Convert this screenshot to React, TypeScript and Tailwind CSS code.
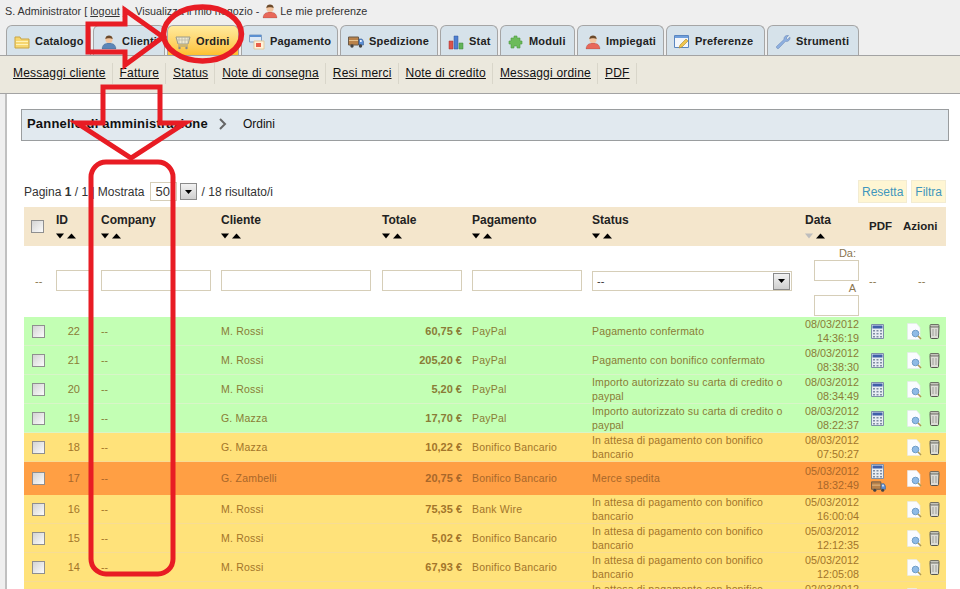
import React from 'react';

const Folder = () => (
  <svg width="16" height="16" viewBox="0 0 16 16" className="shrink-0">
    <path d="M1 3h5l1 2h8v9H1z" fill="#f6d66f" stroke="#c9a545" />
    <path d="M2 7h12v1H2zM2 10h12v1H2z" fill="#fff3b8" />
  </svg>
);

const Person = ({ shirt = '#5b86b8', hair = '#6b4a2b' }: { shirt?: string; hair?: string }) => (
  <svg width="16" height="16" viewBox="0 0 16 16" className="shrink-0">
    <path d="M1 15c0-4 3-6 7-6s7 2 7 6z" fill={shirt} stroke="#00000040" strokeWidth="0.5" />
    <circle cx="8" cy="5.5" r="3.6" fill="#f3c6a0" />
    <path d="M4.3 5C4.5 2.5 6 1.5 8 1.5S11.500 2.500 11.700 5C10 4 6 4 4.300 5z" fill={hair} />
  </svg>
);

const Cart = () => (
  <svg width="16" height="16" viewBox="0 0 16 16" className="shrink-0">
    <path d="M1 3h14l-2 7H3z" fill="#efe9d0" stroke="#9a9a8a" />
    <path d="M4 3v7M7 3v7M10 3v7M13 3v6M2 6h12" stroke="#b4b4a4" strokeWidth="0.7" />
    <path d="M3 12h10" stroke="#9a9a8a" />
    <circle cx="4.500" cy="14" r="1.200" fill="#888" />
    <circle cx="11.500" cy="14" r="1.200" fill="#888" />
  </svg>
);

const Payment = () => (
  <svg width="16" height="16" viewBox="0 0 16 16" className="shrink-0">
    <path d="M0.500 1h12v7H0.500z" fill="#dce9f6" stroke="#7f9fc4" />
    <path d="M1 1h11v2H1z" fill="#5a8fd0" />
    <path d="M5 7h10v8H5z" fill="#fff2d8" stroke="#e0c9a0" />
    <path d="M7 9h5v4H7z" fill="#e8604a" />
  </svg>
);

const Truck = ({ w = 16, h = 14 }: { w?: number; h?: number }) => (
  <svg width={w} height={h} viewBox="0 0 16 14" className="shrink-0">
    <path d="M0.500 2h10v8H0.500z" fill="#b9824a" stroke="#6b5a48" />
    <path d="M1 5h9v1H1z" fill="#e6c28e" />
    <path d="M11 4h3l1.500 2.500V10H11z" fill="#5b8fd6" stroke="#3c5f90" strokeWidth="0.6" />
    <path d="M12 5h1.700v2H12z" fill="#e5f0ff" />
    <circle cx="4" cy="11" r="1.700" fill="#444" />
    <circle cx="12.500" cy="11" r="1.700" fill="#444" />
  </svg>
);

const Chart = () => (
  <svg width="16" height="16" viewBox="0 0 16 16" className="shrink-0">
    <path d="M1 7h4v8H1z" fill="#d9534a" stroke="#a33" strokeWidth="0.5" />
    <path d="M6 2h4v13H6z" fill="#4f7fd0" stroke="#2f569a" strokeWidth="0.5" />
    <path d="M11 9h4v6h-4z" fill="#62b45a" stroke="#3c8438" strokeWidth="0.5" />
  </svg>
);

const Puzzle = () => (
  <svg width="16" height="16" viewBox="0 0 16 16" className="shrink-0">
    <path d="M6 2h3v2h3v3h2v3h-2v4H9v-2H6v2H3v-4H1V7h2V4h3z" fill="#6cbb5a" stroke="#4e9a42" strokeWidth="0.6" />
  </svg>
);

const WindowPen = () => (
  <svg width="16" height="16" viewBox="0 0 16 16" className="shrink-0">
    <path d="M0.500 1.500h14v12h-14z" fill="#f3f6fa" stroke="#5a86c0" />
    <path d="M1 2h13v2H1z" fill="#6f9fdc" />
    <path d="M5 14l1-3 6-6 2 2-6 6z" fill="#f0c64e" stroke="#a8862e" strokeWidth="0.6" />
  </svg>
);

const Wrench = () => (
  <svg width="16" height="16" viewBox="0 0 16 16" className="shrink-0">
    <path d="M1.500 12.500L9 5.500C8.600 3 10.500 1 13.500 1.500L11 4l1.500 1.500L15 3.200C15.300 6 13 8 10.500 7.300L3.500 14.500C2.500 15 1 13.700 1.500 12.500z" fill="#8eb0e0" stroke="#6a88b8" strokeWidth="0.6" />
  </svg>
);

const Calc = () => (
  <svg width="13" height="15" viewBox="0 0 13 15" className="block shrink-0">
    <path d="M0.500 0.500h12v14h-12z" fill="#e8edf3" stroke="#7d8fa8" />
    <path d="M1.500 1.500h10v3h-10z" fill="#3f5fa8" />
    <path d="M2 6h2v1.500H2zM5.500 6h2v1.500h-2zM9 6h2v1.500H9zM2 9h2v1.500H2zM5.500 9h2v1.500h-2zM9 9h2v1.500H9zM2 12h2v1.500H2zM5.500 12h2v1.500h-2zM9 12h2v1.500H9z" fill="#7f8da3" />
  </svg>
);

const DocSearch = () => (
  <svg width="15" height="17" viewBox="0 0 15 17" className="block shrink-0">
    <path d="M0.500 0.500h9l3.500 4v12h-12.500z" fill="#fbfcff" stroke="#e4e7ee" strokeWidth="0.6" />
    <circle cx="8.500" cy="10.500" r="3.300" fill="#8fbbe6" stroke="#6e9cc8" />
    <path d="M11 13l3 3" stroke="#b09a50" strokeWidth="1.600" />
  </svg>
);

const Trash = () => (
  <svg width="11" height="15" viewBox="0 0 11 15" className="block shrink-0">
    <path d="M1 2.500h9l-0.500 11q-0.100 1-1 1h-6q-0.900 0-1-1z" fill="#dcdcd6" stroke="#55554f" />
    <rect x="1" y="0.500" width="9" height="2.500" rx="1" fill="#c4c4bc" stroke="#55554f" strokeWidth="0.8" />
    <path d="M4 5v7M7 5v7" stroke="#a0a09a" />
  </svg>
);

const Sort = ({ faded = false }: { faded?: boolean }) => (
  <svg width="20" height="6" viewBox="0 0 20 6" className="block">
    <path d="M0 0.500h8l-4 5z" fill={faded ? '#bdbdbd' : '#000'} />
    <path d="M11 5.500h9l-4.500-5z" fill="#000" />
  </svg>
);

const Check = () => (
  <span className="block w-[13px] h-[13px] border border-[#8f8f8f] bg-gradient-to-br from-[#d4d4d4] to-[#fbfbfb]" />
);

const SelectArrow = () => (
  <span className="flex items-center justify-center w-[17px] h-[17px] border border-[#8b8b8b] bg-gradient-to-b from-[#f2f2f2] to-[#cfcfcf]">
    <svg width="7" height="4" viewBox="0 0 7 4"><path d="M0 0h7L3.500 4z" fill="#000" /></svg>
  </span>
);

const tabs = [
  { label: 'Catalogo', icon: <Folder />, w: 'w-[85px]' },
  { label: 'Clienti', icon: <Person />, w: 'w-[72px]' },
  { label: 'Ordini', icon: <Cart />, w: 'w-[72px]', active: true },
  { label: 'Pagamento', icon: <Payment />, w: 'w-[97px]' },
  { label: 'Spedizione', icon: <Truck />, w: 'w-[98px]' },
  { label: 'Stat', icon: <Chart />, w: 'w-[58px]' },
  { label: 'Moduli', icon: <Puzzle />, w: 'w-[75px]' },
  { label: 'Impiegati', icon: <Person shirt="#e8685a" />, w: 'w-[87px]' },
  { label: 'Preferenze', icon: <WindowPen />, w: 'w-[99px]' },
  { label: 'Strumenti', icon: <Wrench />, w: 'w-[92px]' },
];

const subLinks = ['Messaggi cliente', 'Fatture', 'Status', 'Note di consegna', 'Resi merci', 'Note di credito', 'Messaggi ordine', 'PDF'];

const WAIT = 'In attesa di pagamento con bonifico bancario';
const AUTH = 'Importo autorizzato su carta di credito o paypal';

type Row = { id: number; name: string; total: string; pay: string; status: string; date: string; time: string; kind: 'green' | 'yellow' | 'orange' };

const rows: Row[] = [
  { id: 22, name: 'M. Rossi', total: '60,75 €', pay: 'PayPal', status: 'Pagamento confermato', date: '08/03/2012', time: '14:36:19', kind: 'green' },
  { id: 21, name: 'M. Rossi', total: '205,20 €', pay: 'PayPal', status: 'Pagamento con bonifico confermato', date: '08/03/2012', time: '08:38:30', kind: 'green' },
  { id: 20, name: 'M. Rossi', total: '5,20 €', pay: 'PayPal', status: AUTH, date: '08/03/2012', time: '08:34:49', kind: 'green' },
  { id: 19, name: 'G. Mazza', total: '17,70 €', pay: 'PayPal', status: AUTH, date: '08/03/2012', time: '08:22:37', kind: 'green' },
  { id: 18, name: 'G. Mazza', total: '10,22 €', pay: 'Bonifico Bancario', status: WAIT, date: '08/03/2012', time: '07:50:27', kind: 'yellow' },
  { id: 17, name: 'G. Zambelli', total: '20,75 €', pay: 'Bonifico Bancario', status: 'Merce spedita', date: '05/03/2012', time: '18:32:49', kind: 'orange' },
  { id: 16, name: 'M. Rossi', total: '75,35 €', pay: 'Bank Wire', status: WAIT, date: '05/03/2012', time: '16:00:04', kind: 'yellow' },
  { id: 15, name: 'M. Rossi', total: '5,02 €', pay: 'Bonifico Bancario', status: WAIT, date: '05/03/2012', time: '12:12:35', kind: 'yellow' },
  { id: 14, name: 'M. Rossi', total: '67,93 €', pay: 'Bonifico Bancario', status: WAIT, date: '05/03/2012', time: '12:05:08', kind: 'yellow' },
  { id: 13, name: 'M. Rossi', total: '31,40 €', pay: 'Bonifico Bancario', status: WAIT, date: '02/03/2012', time: '18:41:12', kind: 'yellow' },
];

const rowClass = {
  green: 'bg-[#c3ffb4] text-[#8a7c36] [&>td]:border-[#d8f5c8]',
  yellow: 'bg-[#ffe27a] text-[#a3752a] [&>td]:border-[#f7dc94]',
  orange: 'bg-[#ff9f44] text-[#a9672a] [&>td]:border-[#ff9f44]',
};

const headers = ['ID', 'Company', 'Cliente', 'Totale', 'Pagamento', 'Status'];

const FilterInput = ({ className }: { className: string }) => (
  <div className={`h-[21px] border border-[#d6ceb8] bg-white ${className}`} />
);

export default function App() {
  return (
    <div className="relative h-[589px] w-[960px] overflow-hidden bg-[#efefef] font-['Liberation_Sans',Arial,sans-serif] text-[11px] text-[#333]">
      {/* Top line */}
      <div className="flex h-[25px] items-center pl-[5px] pb-[3px] text-[10.8px]">
        <span>S. Administrator [ <span className="underline">logout</span> ] - Visualizza il mio negozio - </span>
        <span className="ml-[3px] mr-[2px]"><Person shirt="#e8685a" /></span>
        <span>Le mie preferenze</span>
      </div>

      {/* Tabs */}
      <div className="flex h-[30px] gap-[2px] pl-[6px]">
        {tabs.map((t) => (
          <div
            key={t.label}
            className={`${t.w} flex items-center gap-[5px] pl-[7px] pt-[2px] rounded-t-[6px] border border-b-0 border-[#a5a5a5] text-[11px] font-bold tracking-[0.2px] text-[#222] ${
              t.active ? 'bg-gradient-to-b from-[#ffeb9c] to-[#fdc12e]' : 'bg-[#d6e2ea]'
            }`}
          >
            {t.icon}
            <span>{t.label}</span>
          </div>
        ))}
      </div>

      {/* Sub navigation */}
      <div className="flex h-[39px] items-center border-y border-[#a3a3a3] bg-[#ebe8dd] pl-[6px] pb-[3px]">
        {subLinks.map((l) => (
          <div key={l} className="flex h-[21px] items-center border-r border-[#d9d6ca] pl-[7px] pr-[6px] text-[12px] tracking-[0.2px] text-[#111] underline">
            {l}
          </div>
        ))}
      </div>

      {/* Main */}
      <div className="ml-[5px] h-[500px] border-l-2 border-[#c0c0c0] bg-white pl-[14px] pt-[15px]">
        <div className="flex h-[32px] w-[928px] items-center border border-[#9a9d9f] bg-[#e1e9ef] pl-[5px] pb-[2px] text-[#111]">
          <span className="text-[13px] font-bold tracking-[0.2px]">Pannello di amministrazione</span>
          <svg width="10" height="12" viewBox="0 0 10 12" className="ml-[10px] mr-[15px]"><path d="M2 1l5 5-5 5" fill="none" stroke="#666" strokeWidth="2" /></svg>
          <span className="text-[12px]">Ordini</span>
        </div>

        {/* Pagination toolbar */}
        <div className="mt-[38px] flex h-[25px] w-[925px] items-center pl-[3px] text-[12px] text-[#333]">
          <span>Pagina <b>1</b> / 1 | Mostrata</span>
          <span className="ml-[5px] flex h-[19px] w-[27px] items-center border border-[#d6ceb8] pl-[5px] text-[13px]">50</span>
          <span className="ml-[3px]"><SelectArrow /></span>
          <span className="ml-[5px]">/ 18 risultato/i</span>
          <span className="ml-auto flex h-[23px] items-center border border-[#f3ecd2] bg-[#fff6d3] px-[3px] text-[#3f97bd]">Resetta</span>
          <span className="ml-[4px] flex h-[23px] items-center border border-[#f3ecd2] bg-[#fff6d3] px-[3px] text-[#3f97bd]">Filtra</span>
        </div>

        {/* Orders table */}
        <table className="ml-[3px] mt-[3px] w-[922px] table-fixed border-separate border-spacing-0">
          <colgroup>
            <col className="w-[28px]" />
            <col className="w-[45px]" />
            <col className="w-[120px]" />
            <col className="w-[161px]" />
            <col className="w-[90px]" />
            <col className="w-[120px]" />
            <col className="w-[213px]" />
            <col className="w-[64px]" />
            <col className="w-[34px]" />
            <col className="w-[47px]" />
          </colgroup>
          <thead>
            <tr className="h-[39px] bg-[#f4e6cc] text-[12px] font-bold text-[#222]">
              <th className="pl-[7px]"><Check /></th>
              {headers.map((h) => (
                <th key={h} className="pl-[4px] pt-[6px] text-left align-top font-bold">
                  <div className="leading-[14px]">{h}</div>
                  <div className="mt-[6px]"><Sort /></div>
                </th>
              ))}
              <th className="pl-[4px] pt-[6px] text-left align-top font-bold">
                <div className="leading-[14px]">Data</div>
                <div className="mt-[6px]"><Sort faded /></div>
              </th>
              <th className="pl-[4px] text-left text-[11.5px] font-bold">PDF</th>
              <th className="pl-[4px] text-left text-[11.5px] font-bold">Azioni</th>
            </tr>
            <tr className="h-[71px] bg-white text-[#8a7650]">
              <td className="pl-[11px]">--</td>
              <td className="pl-[4px] pb-[2px]"><FilterInput className="w-[34px]" /></td>
              <td className="pl-[4px] pb-[2px]"><FilterInput className="w-[110px]" /></td>
              <td className="pl-[4px] pb-[2px]"><FilterInput className="w-[150px]" /></td>
              <td className="pl-[4px] pb-[2px]"><FilterInput className="w-[80px]" /></td>
              <td className="pl-[4px] pb-[2px]"><FilterInput className="w-[110px]" /></td>
              <td className="pl-[4px] pb-[1px]">
                <div className="flex h-[20px] w-[200px] items-center justify-between border border-[#d6ceb8] pl-[4px] pr-[1px] text-[#333]">
                  -- <SelectArrow />
                </div>
              </td>
              <td className="pr-[6px] text-right text-[11px] leading-[13px]">
                <div className="flex flex-col items-end">
                  <span className="pr-[3px]">Da:</span>
                  <div className="h-[21px] w-[45px] border border-[#d6ceb8]" />
                  <span className="mt-[1px] pr-[3px]">A</span>
                  <div className="h-[21px] w-[45px] border border-[#d6ceb8]" />
                </div>
              </td>
              <td className="pl-[4px]">--</td>
              <td className="pl-[19px]">--</td>
            </tr>
          </thead>
          <tbody>
            {rows.map((r) => (
              <tr key={r.id} className={`text-[10.5px] leading-[14px] [&>td]:border-b ${rowClass[r.kind]} ${r.kind === 'orange' ? 'h-[33px]' : 'h-[29px]'}`}>
                <td className="pl-[8px]"><Check /></td>
                <td className="pr-[17px] text-right text-[11px]">{r.id}</td>
                <td className="pl-[4px]">--</td>
                <td className="pl-[4px] tracking-[0.2px]">{r.name}</td>
                <td className="pr-[6px] text-right text-[11px] font-bold">{r.total}</td>
                <td className="pl-[4px] tracking-[0.2px]">{r.pay}</td>
                <td className="pl-[4px] pr-[9px] tracking-[0.15px]">{r.status}</td>
                <td className="pr-[6px] text-right text-[10.8px]">
                  {r.date}<br />{r.time}
                </td>
                <td className="pl-[6px]">
                  <div className="flex flex-col gap-[1px]">
                    {r.kind !== 'yellow' && <Calc />}
                    {r.kind === 'orange' && <Truck w={15} h={13} />}
                  </div>
                </td>
                <td>
                  <div className="flex items-center gap-[7px] pl-[8px]">
                    <DocSearch />
                    <Trash />
                  </div>
                </td>
              </tr>
            ))}
          </tbody>
        </table>
      </div>

      {/* Red annotations drawn over the screenshot */}
      <svg width="960" height="589" viewBox="0 0 960 589" className="pointer-events-none absolute left-0 top-0">
        <path d="M125 24H88V52H125V65L163 37L125 10z" fill="none" stroke="#e81c24" strokeWidth="5" />
        <ellipse cx="202.500" cy="34" rx="39" ry="27" fill="none" stroke="#e81c24" strokeWidth="5.500" />
        <path d="M103 123V87H160V123H185L131 158L77 123z" fill="none" stroke="#e81c24" strokeWidth="5" />
        <rect x="91" y="162" width="82" height="412" rx="15" fill="none" stroke="#e81c24" strokeWidth="5" />
      </svg>
    </div>
  );
}
